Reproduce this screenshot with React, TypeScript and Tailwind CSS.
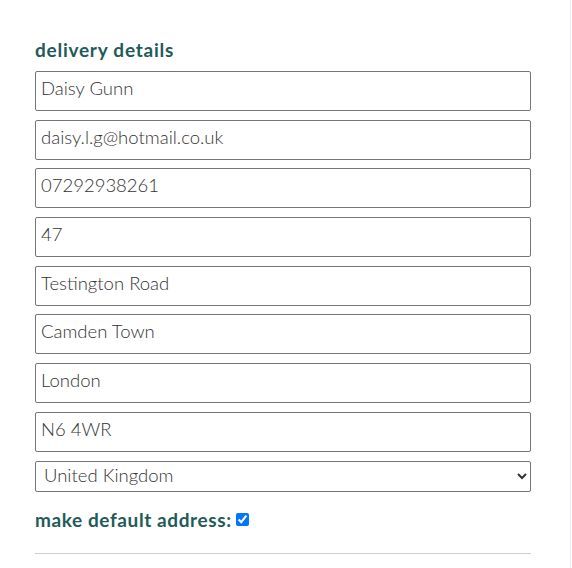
import React from 'react';

const fields = [
  'Daisy Gunn',
  'daisy.l.g@hotmail.co.uk',
  '07292938261',
  '47',
  'Testington Road',
  'Camden Town',
  'London',
  'N6 4WR',
];

const App: React.FC = () => {
  return (
    <div className="min-h-[568px] w-[571px] border-r border-[#ececf0] bg-white font-['Lato',sans-serif]">
      <form className="ml-[35px] w-[496px] pt-[38px]">
        <h2 className="mb-[9px] text-[19px] font-bold leading-[24px] tracking-[0.75px] text-[#1f5b59]">
          delivery details
        </h2>
        <div className="flex flex-col gap-[8.7px]">
          {fields.map((value) => (
            <input
              key={value}
              type="text"
              defaultValue={value}
              className="h-[40px] w-full rounded-[2px] border border-[#767676] px-[5px] pb-[6px] text-[18.5px] font-light text-[#333] outline-none"
            />
          ))}
          <select
            defaultValue="GB"
            className="h-[31px] w-full rounded-[2px] border border-[#767676] px-[4px] pb-[3px] text-[18.5px] font-light text-[#333]"
          >
            <option value="GB">United Kingdom</option>
          </select>
        </div>
        <label className="mt-[16px] flex items-center gap-[4px] text-[19px] font-bold leading-[24px] tracking-[0.6px] text-[#1f5b59]">
          make default address:
          <input type="checkbox" defaultChecked className="h-[13px] w-[13px]" />
        </label>
        <hr className="mt-[21px] border-t border-[#cfcfcf]" />
      </form>
    </div>
  );
};

export default App;
